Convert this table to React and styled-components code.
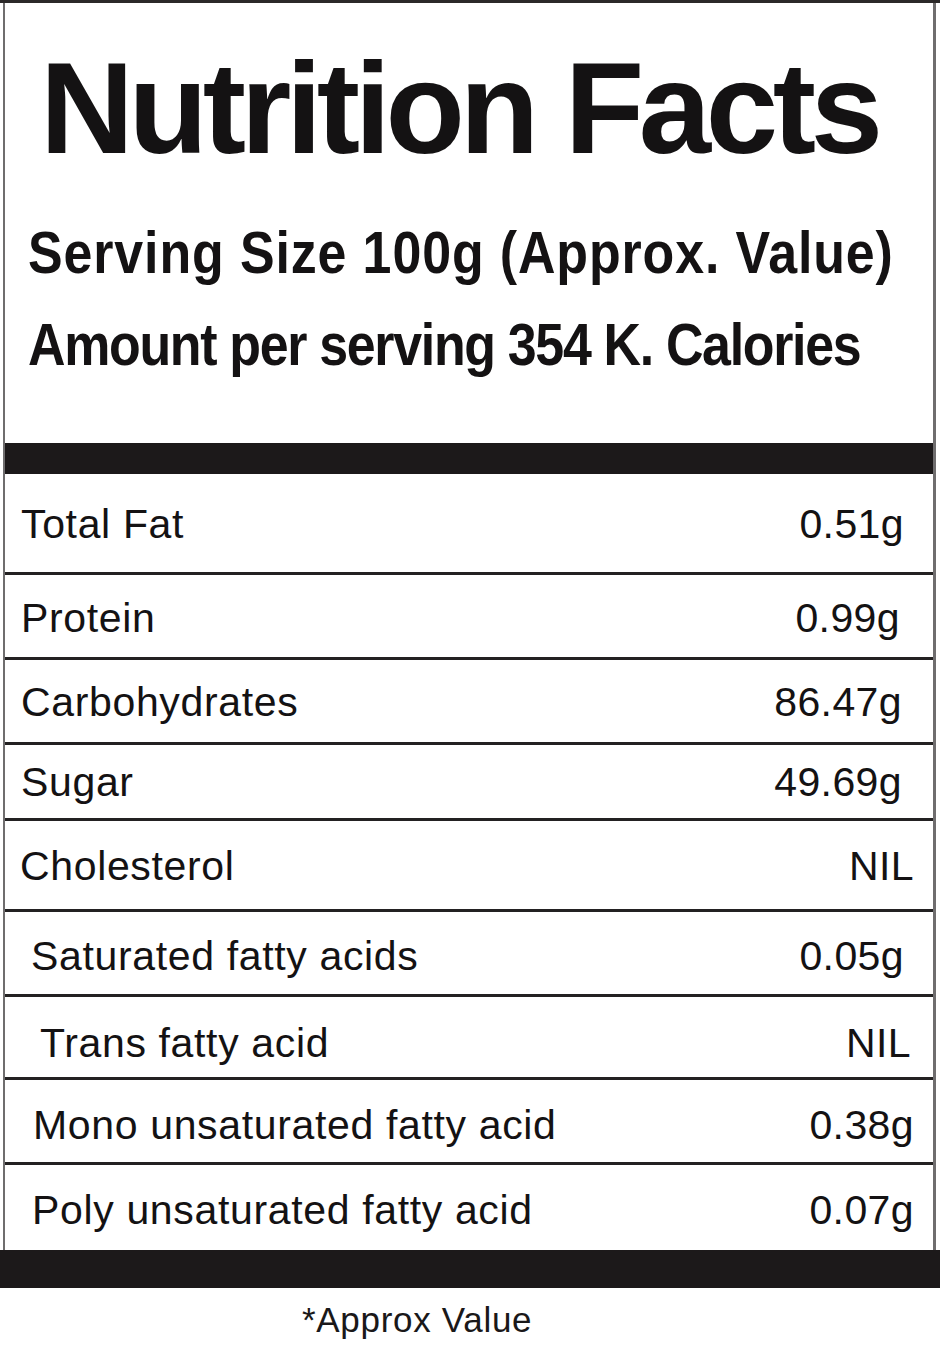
import React from "react";
import styled, { createGlobalStyle } from "styled-components";

const GlobalStyle = createGlobalStyle`
  html, body {
    margin: 0;
    padding: 0;
    background: #fff;
  }
  body {
    font-family: "Liberation Sans", Arial, sans-serif;
    color: #141213;
  }
`;

const nutrients = [
  { name: "Total Fat", value: "0.51g", height: 98, indent: 16, end: 29, nudge: 3, first: true },
  { name: "Protein", value: "0.99g", height: 85, indent: 16, end: 33, nudge: 5 },
  { name: "Carbohydrates", value: "86.47g", height: 85, indent: 16, end: 31, nudge: 2 },
  { name: "Sugar", value: "49.69g", height: 76, indent: 16, end: 31, nudge: 2 },
  { name: "Cholesterol", value: "NIL", height: 91, indent: 15, end: 19, nudge: 2 },
  { name: "Saturated fatty acids", value: "0.05g", height: 85, indent: 26, end: 29, nudge: 7 },
  { name: "Trans fatty acid", value: "NIL", height: 83, indent: 35, end: 22, nudge: 12 },
  { name: "Mono unsaturated fatty acid", value: "0.38g", height: 85, indent: 28, end: 19, nudge: 8 },
  { name: "Poly unsaturated fatty acid", value: "0.07g", height: 88, indent: 27, end: 19, nudge: 5 },
];

const NutritionLabel = () => {
  return (
    <Page>
      <Card>
        <Frame>
          <Header>
            <Title>Nutrition Facts</Title>
            <SubLine tracking={1} gap={51}>
              Serving Size 100g (Approx. Value)
            </SubLine>
            <SubLine tracking={-1.5} gap={33}>
              Amount per serving 354 K. Calories
            </SubLine>
          </Header>
          <ThickBar />
          {nutrients.map((n) => (
            <Row
              key={n.name}
              h={n.height}
              first={n.first}
              indent={n.indent}
              end={n.end}
              nudge={n.nudge}
            >
              <Label>{n.name}</Label>
              <Amount>{n.value}</Amount>
            </Row>
          ))}
        </Frame>
        <BottomBar />
      </Card>
      <Footnote>*Approx Value</Footnote>
    </Page>
  );
};

export default function App() {
  return (
    <>
      <GlobalStyle />
      <NutritionLabel />
    </>
  );
}

const Page = styled.div`
  width: 940px;
  height: 1347px;
  background: #fff;
  overflow: hidden;
`;

const Card = styled.div`
  border-top: 3px solid #2b2929;
`;

const Frame = styled.div`
  margin: 0 4px 0 3px;
  border-left: 2px solid #6f6d6e;
  border-right: 3px solid #6f6d6e;
`;

const Header = styled.div`
  height: 440px;
  box-sizing: border-box;
  padding-top: 40px;
  display: flex;
  flex-direction: column;
  align-items: flex-start;
  white-space: nowrap;
`;

const Title = styled.h1`
  margin: 0;
  padding-left: 35px;
  font-size: 130px;
  line-height: 130px;
  font-weight: 700;
  letter-spacing: -5.3px;
`;

const SubLine = styled.div`
  margin-top: ${(p) => p.gap}px;
  margin-left: 23px;
  font-size: 59px;
  line-height: 59px;
  font-weight: 700;
  letter-spacing: ${(p) => p.tracking}px;
  transform: scaleX(0.88);
  transform-origin: left center;
`;

const ThickBar = styled.div`
  height: 31px;
  background: #1c191a;
`;

const Row = styled.div`
  box-sizing: border-box;
  height: ${(p) => p.h}px;
  display: flex;
  align-items: center;
  justify-content: space-between;
  padding: ${(p) => p.nudge}px ${(p) => p.end}px 0 ${(p) => p.indent}px;
  border-top: ${(p) => (p.first ? "none" : "3px solid #232122")};
  font-size: 41px;
  letter-spacing: 0.65px;
  white-space: nowrap;
`;

const Label = styled.span`
  font-weight: 400;
`;

const Amount = styled.span`
  font-weight: 400;
  letter-spacing: 0.4px;
`;

const BottomBar = styled.div`
  height: 38px;
  background: #1c191a;
`;

const Footnote = styled.div`
  padding: 14px 0 0 302px;
  font-size: 35px;
  line-height: 35px;
  letter-spacing: 0.7px;
  color: #1a1819;
`;
